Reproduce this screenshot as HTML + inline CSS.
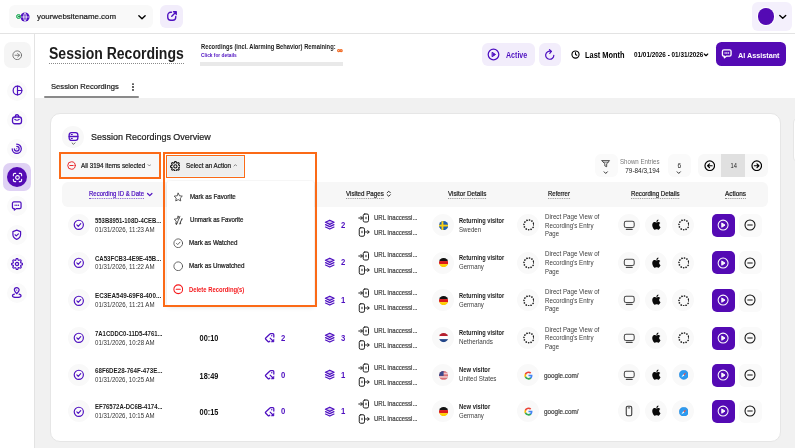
<!DOCTYPE html>
<html><head><meta charset="utf-8"><title>Session Recordings</title>
<style>
html,body{margin:0;padding:0;}
body{width:795px;height:448px;overflow:hidden;position:relative;background:#f1f1f1;font-family:"Liberation Sans",sans-serif;}
.b{position:absolute;display:block;}
.t{position:absolute;white-space:nowrap;font-family:"Liberation Sans",sans-serif;}
.m{-webkit-text-stroke:0.220px currentColor;}
.m2{-webkit-text-stroke:0.350px currentColor;}
</style></head><body>
<div id="app" style="position:absolute;left:0;top:0;width:795px;height:448px;overflow:hidden;will-change:transform;">
<div class="b" style="left:0px;top:0px;width:795px;height:448px;background:#f1f1f1;border-radius:0px;"></div>
<div class="b" style="left:0px;top:0px;width:795px;height:33px;background:#ffffff;border-radius:0px;border-bottom:1px solid #e3e3e3;"></div>
<div class="b" style="left:0px;top:34px;width:34px;height:414px;background:#ffffff;border-radius:0px;border-right:1px solid #e3e3e3;"></div>
<div class="b" style="left:35px;top:34px;width:760px;height:63.6px;background:#ffffff;border-radius:0px;"></div>
<div class="b" style="left:9.3px;top:4.8px;width:143.4px;height:23px;background:#f9f9f9;border-radius:6px;"></div>
<svg class="b" style="left:19.5px;top:11.5px;" width="10" height="10" viewBox="0 0 24 24" fill="none"><circle cx="12" cy="12" r="11" fill="#4e10c0"/><path d="M12 2v20M2 12h20M12 2c-5 5-5 15 0 20M12 2c5 5 5 15 0 20" stroke="#fff" stroke-width="1.6" fill="none"/></svg>
<div class="b" style="left:16.1px;top:13.8px;width:5.4px;height:5.4px;background:#9be3b9;border-radius:2.7px;border:0.900px solid #1fa855;box-sizing:border-box;"></div>
<div class="b" style="left:17.900000000000002px;top:15.6px;width:1.8px;height:1.8px;background:#167a3e;border-radius:0.9px;"></div>
<div class="t m" style="left:37.2px;top:12.02px;font-size:7.95px;line-height:10.54px;font-weight:400;color:#1c1c1c;transform-origin:left center;transform:scaleX(0.9947);">yourwebsitename.com</div>
<svg class="b" style="left:137.4px;top:11.899999999999999px;" width="10" height="10" viewBox="0 0 24 24" fill="none"><path d="M4.500 9l7.500 7 7.500-7" stroke="#000" stroke-width="3.4" stroke-linecap="round" stroke-linejoin="round"/></svg>
<div class="b" style="left:160px;top:5px;width:22.5px;height:23px;background:#f2edfb;border-radius:6px;"></div>
<svg class="b" style="left:165.6px;top:10.399999999999999px;" width="12" height="12" viewBox="0 0 24 24" fill="none"><path d="M11 4.500H9.500a6 6 0 0 0-6 6v4a6 6 0 0 0 6 6h4a6 6 0 0 0 6-6V13" stroke="#4e10c0" stroke-width="2.7" stroke-linecap="round" stroke-linejoin="round"/><path d="M15 3.500h5.500V9M20 4l-8.500 8.500" stroke="#4e10c0" stroke-width="2.7" stroke-linecap="round" stroke-linejoin="round"/></svg>
<div class="b" style="left:751.5px;top:2.2px;width:40.7px;height:28.6px;background:#f4f0fc;border-radius:6px;"></div>
<div class="b" style="left:756.6px;top:7.199999999999999px;width:18.6px;height:18.6px;background:#ffffff;border-radius:9.3px;"></div>
<div class="b" style="left:757.5px;top:8.1px;width:16.8px;height:16.8px;background:#540ab4;border-radius:8.4px;"></div>
<svg class="b" style="left:777.65px;top:12.149999999999999px;" width="9.5" height="9.5" viewBox="0 0 24 24" fill="none"><path d="M4.500 9l7.500 7 7.500-7" stroke="#000" stroke-width="3.4" stroke-linecap="round" stroke-linejoin="round"/></svg>
<div class="b" style="left:3.5px;top:41.7px;width:27px;height:26.3px;background:#f5f5f5;border-radius:7px;"></div>
<svg class="b" style="left:11.75px;top:49.75px;" width="10.5" height="10.5" viewBox="0 0 24 24" fill="none"><circle cx="12" cy="12" r="10" stroke="#6a6a6a" stroke-width="2" stroke-linecap="round" stroke-linejoin="round"/><path d="M7 12h10M13 8l4 4-4 4" stroke="#6a6a6a" stroke-width="2" stroke-linecap="round" stroke-linejoin="round"/></svg>
<div class="b" style="left:7px;top:80.6px;width:20px;height:20px;background:#fafafa;border-radius:10px;"></div>
<div class="b" style="left:7px;top:109.5px;width:20px;height:20px;background:#fafafa;border-radius:10px;"></div>
<div class="b" style="left:7px;top:139px;width:20px;height:20px;background:#fafafa;border-radius:10px;"></div>
<div class="b" style="left:7px;top:195.8px;width:20px;height:20px;background:#fafafa;border-radius:10px;"></div>
<div class="b" style="left:7px;top:224.8px;width:20px;height:20px;background:#fafafa;border-radius:10px;"></div>
<div class="b" style="left:7px;top:253.89999999999998px;width:20px;height:20px;background:#fafafa;border-radius:10px;"></div>
<div class="b" style="left:7px;top:283px;width:20px;height:20px;background:#fafafa;border-radius:10px;"></div>
<svg class="b" style="left:11.5px;top:85.1px;" width="11" height="11" viewBox="0 0 24 24" fill="none"><circle cx="12" cy="12" r="9.5" stroke="#4e10c0" stroke-width="2.6" stroke-linecap="round" stroke-linejoin="round"/><path d="M12 2.5V21.5M12 12h9.5" stroke="#4e10c0" stroke-width="2.6" stroke-linecap="round" stroke-linejoin="round"/></svg>
<svg class="b" style="left:11.100000000000001px;top:113.1px;" width="12" height="12" viewBox="0 0 24 24" fill="none"><rect x="3" y="8" width="18" height="13.500" rx="4.500" stroke="#4e10c0" stroke-width="2.6" stroke-linecap="round" stroke-linejoin="round"/><path d="M8.500 8V7a3.500 3.500 0 0 1 7 0v1" stroke="#4e10c0" stroke-width="2.6" stroke-linecap="round" stroke-linejoin="round"/><path d="M7.500 12.500q4.500 4 9 0" stroke="#4e10c0" stroke-width="2.2" stroke-linecap="round" stroke-linejoin="round"/></svg>
<svg class="b" style="left:11.25px;top:143.25px;" width="11.5" height="11.5" viewBox="0 0 24 24" fill="none"><path d="M12 2.500a9.500 9.500 0 1 1-9.500 9.500" stroke="#4e10c0" stroke-width="2.6" stroke-linecap="round" stroke-linejoin="round"/><path d="M12 7a5 5 0 1 1-5 5" stroke="#4e10c0" stroke-width="2.6" stroke-linecap="round" stroke-linejoin="round"/><circle cx="12" cy="12" r="1.300" fill="#4e10c0"/></svg>
<div class="b" style="left:3.2px;top:163.2px;width:28px;height:27.8px;background:#dfd1f4;border-radius:7px;"></div>
<div class="b" style="left:7.200000000000001px;top:167.2px;width:19.8px;height:19.8px;background:#540ab4;border-radius:9.9px;"></div>
<svg class="b" style="left:11.5px;top:171.5px;" width="11" height="11" viewBox="0 0 24 24" fill="none"><circle cx="12" cy="12" r="4" stroke="#fff" stroke-width="2.4" stroke-linecap="round" stroke-linejoin="round"/><path d="M3 8V6a3 3 0 0 1 3-3h2M16 3h2a3 3 0 0 1 3 3v2M21 16v2a3 3 0 0 1-3 3h-2M8 21H6a3 3 0 0 1-3-3v-2" stroke="#fff" stroke-width="2.4" stroke-linecap="round" stroke-linejoin="round"/></svg>
<svg class="b" style="left:11.25px;top:200.05px;" width="11.5" height="11.5" viewBox="0 0 24 24" fill="none"><path d="M6 4h12a3 3 0 0 1 3 3v8a3 3 0 0 1-3 3h-7l-4 3v-3H6a3 3 0 0 1-3-3V7a3 3 0 0 1 3-3z" stroke="#4e10c0" stroke-width="2.6" stroke-linecap="round" stroke-linejoin="round"/><path d="M8.500 11h.1M12 11h.1M15.500 11h.1" stroke="#4e10c0" stroke-width="2.8" stroke-linecap="round" stroke-linejoin="round"/></svg>
<svg class="b" style="left:11.25px;top:229.05px;" width="11.5" height="11.5" viewBox="0 0 24 24" fill="none"><path d="M12 2.500l8 3v6c0 5-3.500 8.500-8 10-4.500-1.500-8-5-8-10v-6z" stroke="#4e10c0" stroke-width="2.6" stroke-linecap="round" stroke-linejoin="round"/><path d="M8.500 12l2.500 2.500 4.500-4.500" stroke="#4e10c0" stroke-width="2.4" stroke-linecap="round" stroke-linejoin="round"/></svg>
<svg class="b" style="left:11.0px;top:257.9px;" width="12" height="12" viewBox="0 0 24 24" fill="none"><circle cx="12" cy="12" r="3.200" stroke="#4e10c0" stroke-width="2.6" stroke-linecap="round" stroke-linejoin="round"/><path d="M19.4 15a1.65 1.65 0 0 0 .33 1.82l.06.06a2 2 0 0 1 0 2.83 2 2 0 0 1-2.83 0l-.06-.06a1.65 1.65 0 0 0-1.82-.33 1.65 1.65 0 0 0-1 1.51V21a2 2 0 0 1-2 2 2 2 0 0 1-2-2v-.09A1.65 1.65 0 0 0 9 19.4a1.65 1.65 0 0 0-1.82.33l-.06.06a2 2 0 0 1-2.83 0 2 2 0 0 1 0-2.83l.06-.06a1.65 1.65 0 0 0 .33-1.82 1.65 1.65 0 0 0-1.51-1H3a2 2 0 0 1-2-2 2 2 0 0 1 2-2h.09A1.65 1.65 0 0 0 4.6 9a1.65 1.65 0 0 0-.33-1.82l-.06-.06a2 2 0 0 1 0-2.83 2 2 0 0 1 2.83 0l.06.06a1.65 1.65 0 0 0 1.82.33H9a1.65 1.65 0 0 0 1-1.51V3a2 2 0 0 1 2-2 2 2 0 0 1 2 2v.09a1.65 1.65 0 0 0 1 1.51 1.65 1.65 0 0 0 1.82-.33l.06-.06a2 2 0 0 1 2.83 0 2 2 0 0 1 0 2.83l-.06.06a1.65 1.65 0 0 0-.33 1.82V9a1.65 1.65 0 0 0 1.51 1H21a2 2 0 0 1 2 2 2 2 0 0 1-2 2h-.09a1.65 1.65 0 0 0-1.51 1z" stroke="#4e10c0" stroke-width="2.4" stroke-linecap="round" stroke-linejoin="round"/></svg>
<svg class="b" style="left:11.25px;top:287.25px;" width="11.5" height="11.5" viewBox="0 0 24 24" fill="none"><path d="M12 14c3-3 5-5 5-7.500a5 5 0 0 0-10 0c0 2.500 2 4.500 5 7.500z" stroke="#4e10c0" stroke-width="2.6" stroke-linecap="round" stroke-linejoin="round"/><circle cx="12" cy="6.500" r="1.200" fill="#4e10c0"/><path d="M7 15c-2.500.700-4 1.800-4 3 0 2 4 3.500 9 3.500s9-1.500 9-3.500c0-1.200-1.500-2.300-4-3" stroke="#4e10c0" stroke-width="2.6" stroke-linecap="round" stroke-linejoin="round"/></svg>
<div class="t " style="left:49.3px;top:44.02px;font-size:15.8px;line-height:19.96px;font-weight:700;color:#1c1c1c;transform-origin:left center;transform:scaleX(0.8876);">Session Recordings</div>
<div class="b" style="left:49px;top:62.5px;width:135px;height:1px;background:transparent;border-radius:0px;border-top:1px dotted #8a8a8a;height:0;"></div>
<div class="t " style="left:200.6px;top:43.02px;font-size:6.57px;line-height:8.88px;font-weight:700;color:#1c1c1c;transform-origin:left center;transform:scaleX(0.8803);">Recordings (incl. Alarming Behavior) Remaining:</div>
<div class="t m2" style="left:337px;top:46.02px;font-size:7.95px;line-height:10.54px;font-weight:700;color:#f0641a;transform-origin:left center;transform:scaleX(0.9873);">&#8734;</div>
<div class="t " style="left:200.6px;top:52.02px;font-size:5.72px;line-height:7.86px;font-weight:700;color:#4e10c0;transform-origin:left center;transform:scaleX(0.8405);">Click for details</div>
<div class="b" style="left:200px;top:62px;width:143px;height:3.5px;background:#e9e9e9;border-radius:0px;"></div>
<div class="t m" style="left:51.3px;top:82.02px;font-size:8.06px;line-height:10.67px;font-weight:400;color:#1c1c1c;transform-origin:left center;transform:scaleX(0.9472);">Session Recordings</div>
<svg class="b" style="left:128.0px;top:81.6px;" width="10" height="10" viewBox="0 0 24 24" fill="none"><circle cx="12" cy="5" r="2.200" fill="#1c1c1c"/><circle cx="12" cy="12" r="2.200" fill="#1c1c1c"/><circle cx="12" cy="19" r="2.200" fill="#1c1c1c"/></svg>
<div class="b" style="left:44px;top:96.2px;width:94.5px;height:1.7px;background:#8a8a8a;border-radius:1px;"></div>
<div class="b" style="left:482px;top:42.5px;width:52.5px;height:23px;background:#f2edfb;border-radius:6px;"></div>
<svg class="b" style="left:487.2px;top:47.8px;" width="13" height="13" viewBox="0 0 24 24" fill="none"><circle cx="12" cy="12" r="9.800" stroke="#4e10c0" stroke-width="2.3" stroke-linecap="round" stroke-linejoin="round"/><path d="M10 8.200l5.800 3.800-5.800 3.800z" stroke="#4e10c0" stroke-width="1.8" stroke-linecap="round" stroke-linejoin="round" fill="#4e10c0"/></svg>
<div class="t " style="left:505.6px;top:51.02px;font-size:8.16px;line-height:10.79px;font-weight:700;color:#4e10c0;transform-origin:left center;transform:scaleX(0.8659);">Active</div>
<div class="b" style="left:538.5px;top:42.5px;width:22.5px;height:23px;background:#f2edfb;border-radius:6px;"></div>
<svg class="b" style="left:544.05px;top:48.55px;" width="11.5" height="11.5" viewBox="0 0 24 24" fill="none"><path d="M20.500 13a8.500 8.500 0 1 1-6-8.200" stroke="#4e10c0" stroke-width="2.5" stroke-linecap="round" stroke-linejoin="round"/><path d="M11.500 1.500l4 3.500-3.500 4" stroke="#4e10c0" stroke-width="2.5" stroke-linecap="round" stroke-linejoin="round"/></svg>
<svg class="b" style="left:571.2px;top:49.8px;" width="9" height="9" viewBox="0 0 24 24" fill="none"><circle cx="12" cy="12" r="9.500" stroke="#000" stroke-width="3" stroke-linecap="round" stroke-linejoin="round"/><path d="M12 6.500V12l3.500 2" stroke="#000" stroke-width="2.8" stroke-linecap="round" stroke-linejoin="round"/></svg>
<div class="t " style="left:584.5px;top:50.02px;font-size:8.37px;line-height:11.04px;font-weight:700;color:#000;transform-origin:left center;transform:scaleX(0.8883);">Last Month</div>
<div class="t " style="left:634px;top:50.02px;font-size:6.68px;line-height:9.02px;font-weight:700;color:#000;transform-origin:left center;transform:scaleX(0.9544);">01/01/2026 - 01/31/2026</div>
<svg class="b" style="left:702.8px;top:51.6px;" width="6" height="6" viewBox="0 0 24 24" fill="none"><path d="M5 8l7 7 7-7" stroke="#000" stroke-width="4.5" stroke-linecap="round" stroke-linejoin="round"/></svg>
<div class="b" style="left:716px;top:42.3px;width:70px;height:23.4px;background:#540ab4;border-radius:5.5px;"></div>
<svg class="b" style="left:721.45px;top:48.45px;" width="11.5" height="11.5" viewBox="0 0 24 24" fill="none"><path d="M6 4h12a3 3 0 0 1 3 3v7a3 3 0 0 1-3 3h-7l-4 3.500V17H6a3 3 0 0 1-3-3V7a3 3 0 0 1 3-3z" stroke="#fff" stroke-width="2.8" stroke-linecap="round" stroke-linejoin="round"/><path d="M8.500 10.500h.1M12 10.500h.1M15.500 10.500h.1" stroke="#fff" stroke-width="3" stroke-linecap="round" stroke-linejoin="round"/></svg>
<div class="t " style="left:737.8px;top:51.02px;font-size:8.06px;line-height:10.67px;font-weight:700;color:#ffffff;transform-origin:left center;transform:scaleX(0.8979);">AI Assistant</div>
<div class="b" style="left:49.6px;top:113px;width:731px;height:328.8px;background:#ffffff;border-radius:10px;border:1px solid #e6e6e6;box-sizing:border-box;"></div>
<div class="b" style="left:793px;top:117px;width:10px;height:44px;background:#ffffff;border-radius:6px;border:1px solid #e6e6e6;"></div>
<div class="b" style="left:62.4px;top:126.4px;width:21.2px;height:21.2px;background:#f8f8f8;border-radius:10.6px;"></div>
<svg class="b" style="left:67.6px;top:130.7px;" width="11" height="11" viewBox="0 0 24 24" fill="none"><rect x="2.500" y="3.500" width="19" height="17" rx="5" stroke="#4e10c0" stroke-width="2.8" stroke-linecap="round" stroke-linejoin="round"/><path d="M2.500 12h19" stroke="#4e10c0" stroke-width="2.8" stroke-linecap="round" stroke-linejoin="round"/><path d="M7 7.800h2.500M7 16.200h2.500" stroke="#4e10c0" stroke-width="2.2" stroke-linecap="round" stroke-linejoin="round"/></svg>
<svg class="b" style="left:70.5px;top:141.3px;" width="5" height="5" viewBox="0 0 24 24" fill="none"><path d="M5 9l7 7 7-7" stroke="#333" stroke-width="3.5" stroke-linecap="round" stroke-linejoin="round"/></svg>
<div class="t m" style="left:90.8px;top:131.02px;font-size:9.86px;line-height:12.83px;font-weight:400;color:#1c1c1c;transform-origin:left center;transform:scaleX(0.9123);">Session Recordings Overview</div>
<div class="b" style="left:595px;top:154px;width:22.5px;height:23px;background:#fafafa;border-radius:6px;"></div>
<svg class="b" style="left:601.25px;top:159.45px;" width="9.5" height="9.5" viewBox="0 0 24 24" fill="none"><path d="M2.500 4h19l-7.200 8.500v7l-4.600 -2v-5z" stroke="#1c1c1c" stroke-width="1.9" stroke-linecap="round" stroke-linejoin="round"/><path d="M6 8h12" stroke="#1c1c1c" stroke-width="1.5" stroke-linecap="round" stroke-linejoin="round"/></svg>
<svg class="b" style="left:603.25px;top:170.05px;" width="5.5" height="5.5" viewBox="0 0 24 24" fill="none"><path d="M5 8l7 7 7-7" stroke="#000" stroke-width="3.6" stroke-linecap="round" stroke-linejoin="round"/></svg>
<div class="t " style="left:560px;top:158.02px;font-size:6.57px;line-height:8.88px;font-weight:400;color:#7a7a7a;width:99.5px;text-align:right;transform-origin:right center;transform:scaleX(0.9332);">Shown Entries</div>
<div class="t " style="left:560px;top:166.02px;font-size:6.68px;line-height:9.02px;font-weight:400;color:#1c1c1c;width:99.5px;text-align:right;transform-origin:right center;transform:scaleX(0.9600);">79-84/3,194</div>
<div class="b" style="left:668px;top:154px;width:22.5px;height:23px;background:#fafafa;border-radius:6px;"></div>
<div class="t " style="left:668px;top:162.02px;font-size:6.6px;line-height:8.92px;font-weight:400;color:#1c1c1c;width:22.5px;text-align:center;">6</div>
<svg class="b" style="left:676.45px;top:170.05px;" width="5.5" height="5.5" viewBox="0 0 24 24" fill="none"><path d="M5 8l7 7 7-7" stroke="#000" stroke-width="3.6" stroke-linecap="round" stroke-linejoin="round"/></svg>
<div class="b" style="left:698px;top:154.3px;width:70.3px;height:22.5px;background:#f8f8f8;border-radius:6px;"></div>
<div class="b" style="left:721.3px;top:154.3px;width:23.6px;height:22.5px;background:#e0e0e0;border-radius:0px;"></div>
<div class="t " style="left:721.6px;top:161.02px;font-size:7.0px;line-height:9.4px;font-weight:400;color:#1c1c1c;width:23.3px;text-align:center;transform-origin:center center;transform:scaleX(0.8208);">14</div>
<svg class="b" style="left:703.65px;top:159.75px;" width="11.5" height="11.5" viewBox="0 0 24 24" fill="none"><circle cx="12" cy="12" r="10" stroke="#000" stroke-width="2.5" stroke-linecap="round" stroke-linejoin="round"/><path d="M17 12H7.500M11.500 8l-4 4 4 4" stroke="#000" stroke-width="2.5" stroke-linecap="round" stroke-linejoin="round"/></svg>
<svg class="b" style="left:750.85px;top:159.75px;" width="11.5" height="11.5" viewBox="0 0 24 24" fill="none"><circle cx="12" cy="12" r="10" stroke="#000" stroke-width="2.5" stroke-linecap="round" stroke-linejoin="round"/><path d="M7 12h9.500M12.500 8l4 4-4 4" stroke="#000" stroke-width="2.5" stroke-linecap="round" stroke-linejoin="round"/></svg>
<div class="b" style="left:62px;top:181.5px;width:706.3px;height:25px;background:#f7f7f7;border-radius:6px;"></div>
<div class="t m" style="left:89px;top:190.02px;font-size:6.78px;line-height:9.14px;font-weight:400;color:#4e10c0;transform-origin:left center;transform:scaleX(0.8862);border-bottom:1px dotted #7a4fd0;line-height:8px;">Recording ID &amp; Date</div>
<svg class="b" style="left:145.75px;top:190.55px;" width="7.5" height="7.5" viewBox="0 0 24 24" fill="none"><path d="M5 8l7 7 7-7" stroke="#4e10c0" stroke-width="3.8" stroke-linecap="round" stroke-linejoin="round"/></svg>
<div class="t m" style="left:346px;top:190.02px;font-size:6.78px;line-height:9.14px;font-weight:400;color:#1c1c1c;transform-origin:left center;transform:scaleX(0.9164);border-bottom:1px dotted #8a8a8a;line-height:8px;">Visited Pages</div>
<svg class="b" style="left:384.25px;top:189.25px;" width="9.5" height="9.5" viewBox="0 0 24 24" fill="none"><path d="M8 9.500l4-4 4 4M8 14.500l4 4 4-4" stroke="#222" stroke-width="2.4" stroke-linecap="round" stroke-linejoin="round"/></svg>
<div class="t m" style="left:448.4px;top:190.02px;font-size:6.78px;line-height:9.14px;font-weight:400;color:#1c1c1c;transform-origin:left center;transform:scaleX(0.9285);border-bottom:1px dotted #8a8a8a;line-height:8px;">Visitor Details</div>
<div class="t m" style="left:547.8px;top:190.02px;font-size:6.78px;line-height:9.14px;font-weight:400;color:#1c1c1c;transform-origin:left center;transform:scaleX(0.8821);border-bottom:1px dotted #8a8a8a;line-height:8px;">Referrer</div>
<div class="t m" style="left:631px;top:190.02px;font-size:6.78px;line-height:9.14px;font-weight:400;color:#1c1c1c;transform-origin:left center;transform:scaleX(0.9100);border-bottom:1px dotted #8a8a8a;line-height:8px;">Recording Details</div>
<div class="t m" style="left:725px;top:190.02px;font-size:6.78px;line-height:9.14px;font-weight:400;color:#1c1c1c;transform-origin:left center;transform:scaleX(0.9465);border-bottom:1px dotted #8a8a8a;line-height:8px;">Actions</div>
<div class="b" style="left:67.8px;top:214.2px;width:22px;height:22px;background:#f9f9f9;border-radius:11px;"></div>
<svg class="b" style="left:73.0px;top:219.39999999999998px;" width="11.6" height="11.6" viewBox="0 0 24 24" fill="none"><circle cx="12" cy="12" r="9.500" stroke="#4e10c0" stroke-width="2.4" stroke-linecap="round" stroke-linejoin="round"/><path d="M8 12.300l2.800 2.800 5.200-5.600" stroke="#4e10c0" stroke-width="2.4" stroke-linecap="round" stroke-linejoin="round"/></svg>
<div class="t " style="left:94.5px;top:216.02px;font-size:6.68px;line-height:9.02px;font-weight:700;color:#1c1c1c;transform-origin:left center;transform:scaleX(0.8880);">553B8951-108D-4CEB...</div>
<div class="t " style="left:94.5px;top:225.02px;font-size:7.0px;line-height:9.4px;font-weight:400;color:#333;transform-origin:left center;transform:scaleX(0.8752);">01/31/2026, 11:23 AM</div>
<svg class="b" style="left:323.65px;top:219.45px;" width="11.5" height="11.5" viewBox="0 0 24 24" fill="none"><path d="M12 2.500l9 4.300-9 4.300-9-4.300z" stroke="#4e10c0" stroke-width="2.6" stroke-linecap="round" stroke-linejoin="round" fill="#4e10c0" fill-opacity=".25"/><path d="M3.200 11.800l8.800 4.200 8.800-4.200M3.200 16.800l8.800 4.200 8.800-4.200" stroke="#4e10c0" stroke-width="2.6" stroke-linecap="round" stroke-linejoin="round"/></svg>
<div class="t " style="left:340.7px;top:220.02px;font-size:8.8px;line-height:11.56px;font-weight:700;color:#4e10c0;transform-origin:left center;transform:scaleX(0.8764);">2</div>
<svg class="b" style="left:357.8px;top:212.1px;" width="12" height="12" viewBox="0 0 24 24" fill="none"><rect x="10.500" y="4" width="10.500" height="16" rx="3" stroke="#222" stroke-width="2" stroke-linecap="round" stroke-linejoin="round"/><path d="M1.500 12h7M6 9l2.800 3-2.800 3" stroke="#222" stroke-width="2" stroke-linecap="round" stroke-linejoin="round"/><path d="M16 10.500v3" stroke="#222" stroke-width="2" stroke-linecap="round" stroke-linejoin="round"/></svg>
<div class="t m" style="left:373.5px;top:213.02px;font-size:7.0px;line-height:9.4px;font-weight:400;color:#444;transform-origin:left center;transform:scaleX(0.8646);">URL inaccessi...</div>
<svg class="b" style="left:357.8px;top:226.39999999999998px;" width="12" height="12" viewBox="0 0 24 24" fill="none"><rect x="2.500" y="3.500" width="10.500" height="17" rx="3" stroke="#222" stroke-width="2" stroke-linecap="round" stroke-linejoin="round"/><path d="M15 12h7M19.500 9l2.800 3-2.800 3" stroke="#222" stroke-width="2" stroke-linecap="round" stroke-linejoin="round"/><path d="M8 10.500v3" stroke="#222" stroke-width="2" stroke-linecap="round" stroke-linejoin="round"/></svg>
<div class="t m" style="left:373.5px;top:228.02px;font-size:7.0px;line-height:9.4px;font-weight:400;color:#444;transform-origin:left center;transform:scaleX(0.8646);">URL inaccessi...</div>
<div class="b" style="left:432.4px;top:214.2px;width:22px;height:22px;background:#f9f9f9;border-radius:11px;"></div>
<svg class="b" style="left:438.79999999999995px;top:220.6px" width="9.2" height="9.2" viewBox="0 0 20 20"><defs><clipPath id="fc"><circle cx="10" cy="10" r="10"/></clipPath></defs><g clip-path="url(#fc)"><rect width="20" height="20" fill="#1f5fae"/><rect x="5.500" width="4" height="20" fill="#fdd116"/><rect y="8" width="20" height="4" fill="#fdd116"/></g><circle cx="10" cy="10" r="9.700" fill="none" stroke="rgba(0,0,0,.08)" stroke-width=".6"/></svg>
<div class="t " style="left:458.8px;top:217.02px;font-size:6.57px;line-height:8.88px;font-weight:700;color:#1c1c1c;transform-origin:left center;transform:scaleX(0.8607);">Returning visitor</div>
<div class="t " style="left:458.8px;top:226.02px;font-size:6.57px;line-height:8.88px;font-weight:400;color:#3d3d3d;transform-origin:left center;transform:scaleX(0.9360);">Sweden</div>
<div class="b" style="left:517.4px;top:214.2px;width:22px;height:22px;background:#f9f9f9;border-radius:11px;"></div>
<svg class="b" style="left:522.5px;top:219.29999999999998px;" width="11.8" height="11.8" viewBox="0 0 24 24" fill="none"><circle cx="12" cy="12" r="10" stroke="#1c1c1c" stroke-width="3.300" stroke-linecap="round" stroke-dasharray="0.2 5.036" fill="none"/></svg>
<div class="t " style="left:544.5px;top:213.02px;font-size:6.57px;line-height:8.88px;font-weight:400;color:#3d3d3d;transform-origin:left center;transform:scaleX(0.9441);">Direct Page View of</div>
<div class="t " style="left:544.5px;top:222.02px;font-size:6.57px;line-height:8.88px;font-weight:400;color:#3d3d3d;transform-origin:left center;transform:scaleX(0.9400);">Recording's Entry</div>
<div class="t " style="left:544.5px;top:230.02px;font-size:6.57px;line-height:8.88px;font-weight:400;color:#3d3d3d;transform-origin:left center;transform:scaleX(0.9134);">Page</div>
<div class="b" style="left:618px;top:214.2px;width:22px;height:22px;background:#f9f9f9;border-radius:11px;"></div>
<div class="b" style="left:645.2px;top:214.2px;width:22px;height:22px;background:#f9f9f9;border-radius:11px;"></div>
<div class="b" style="left:672.4px;top:214.2px;width:22px;height:22px;background:#f9f9f9;border-radius:11px;"></div>
<svg class="b" style="left:623.05px;top:219.14999999999998px;" width="12.5" height="12.5" viewBox="0 0 24 24" fill="none"><rect x="2.500" y="4.500" width="19" height="12" rx="3.500" stroke="#4a4a4a" stroke-width="2" stroke-linecap="round" stroke-linejoin="round"/><path d="M6.500 20h11" stroke="#4a4a4a" stroke-width="2.4" stroke-linecap="round" stroke-linejoin="round"/></svg>
<svg class="b" style="left:650.65px;top:219.14999999999998px;" width="11.5" height="11.5" viewBox="0 0 24 24" fill="none"><path fill="#0a0a0a" d="M17.050 12.540c-.030-2.700 2.200-4 2.300-4.060-1.260-1.830-3.200-2.080-3.900-2.110-1.650-.170-3.230.980-4.070.980-.840 0-2.140-.960-3.510-.930-1.810.030-3.470 1.050-4.400 2.670-1.880 3.250-.480 8.070 1.350 10.710.890 1.290 1.960 2.740 3.350 2.690 1.350-.050 1.860-.870 3.480-.870 1.620 0 2.080.870 3.500.840 1.450-.030 2.370-1.320 3.250-2.610 1.030-1.500 1.450-2.950 1.470-3.020-.030-.010-2.820-1.080-2.850-4.290zM14.400 4.600c.740-.900 1.240-2.150 1.110-3.400-1.070.040-2.360.710-3.130 1.610-.690.800-1.290 2.070-1.130 3.300 1.190.090 2.410-.610 3.150-1.510z"/></svg>
<svg class="b" style="left:677.5px;top:219.29999999999998px;" width="11.8" height="11.8" viewBox="0 0 24 24" fill="none"><circle cx="12" cy="12" r="10" stroke="#1c1c1c" stroke-width="3.300" stroke-linecap="round" stroke-dasharray="0.2 5.036" fill="none"/></svg>
<div class="b" style="left:711.5px;top:213.7px;width:23.5px;height:23px;background:#540ab4;border-radius:5px;"></div>
<svg class="b" style="left:717.1999999999999px;top:219.1px;" width="12.2" height="12.2" viewBox="0 0 24 24" fill="none"><circle cx="12" cy="12" r="9.800" stroke="#fff" stroke-width="2" stroke-linecap="round" stroke-linejoin="round"/><path d="M10 8.200l5.800 3.800-5.800 3.800z" stroke="#fff" stroke-width="1.9" stroke-linecap="round" stroke-linejoin="round" fill="#fff"/></svg>
<div class="b" style="left:738.7px;top:213.7px;width:23px;height:23px;background:#fafafa;border-radius:6px;"></div>
<svg class="b" style="left:744.2px;top:219.2px;" width="12" height="12" viewBox="0 0 24 24" fill="none"><circle cx="12" cy="12" r="10" stroke="#111" stroke-width="2.1" stroke-linecap="round" stroke-linejoin="round"/><path d="M7.500 12h9" stroke="#111" stroke-width="2" stroke-linecap="round" stroke-linejoin="round"/></svg>
<div class="b" style="left:67.8px;top:251.8px;width:22px;height:22px;background:#f9f9f9;border-radius:11px;"></div>
<svg class="b" style="left:73.0px;top:257.0px;" width="11.6" height="11.6" viewBox="0 0 24 24" fill="none"><circle cx="12" cy="12" r="9.500" stroke="#4e10c0" stroke-width="2.4" stroke-linecap="round" stroke-linejoin="round"/><path d="M8 12.300l2.800 2.800 5.200-5.600" stroke="#4e10c0" stroke-width="2.4" stroke-linecap="round" stroke-linejoin="round"/></svg>
<div class="t " style="left:94.5px;top:254.02px;font-size:6.68px;line-height:9.02px;font-weight:700;color:#1c1c1c;transform-origin:left center;transform:scaleX(0.9063);">CA53FCB3-4E9E-45B...</div>
<div class="t " style="left:94.5px;top:262.02px;font-size:7.0px;line-height:9.4px;font-weight:400;color:#333;transform-origin:left center;transform:scaleX(0.8752);">01/31/2026, 11:22 AM</div>
<svg class="b" style="left:323.65px;top:257.05px;" width="11.5" height="11.5" viewBox="0 0 24 24" fill="none"><path d="M12 2.500l9 4.300-9 4.300-9-4.300z" stroke="#4e10c0" stroke-width="2.6" stroke-linecap="round" stroke-linejoin="round" fill="#4e10c0" fill-opacity=".25"/><path d="M3.200 11.800l8.800 4.200 8.800-4.200M3.200 16.800l8.800 4.200 8.800-4.200" stroke="#4e10c0" stroke-width="2.6" stroke-linecap="round" stroke-linejoin="round"/></svg>
<div class="t " style="left:340.7px;top:257.02px;font-size:8.8px;line-height:11.56px;font-weight:700;color:#4e10c0;transform-origin:left center;transform:scaleX(0.8764);">2</div>
<svg class="b" style="left:357.8px;top:249.70000000000002px;" width="12" height="12" viewBox="0 0 24 24" fill="none"><rect x="10.500" y="4" width="10.500" height="16" rx="3" stroke="#222" stroke-width="2" stroke-linecap="round" stroke-linejoin="round"/><path d="M1.500 12h7M6 9l2.800 3-2.800 3" stroke="#222" stroke-width="2" stroke-linecap="round" stroke-linejoin="round"/><path d="M16 10.500v3" stroke="#222" stroke-width="2" stroke-linecap="round" stroke-linejoin="round"/></svg>
<div class="t m" style="left:373.5px;top:250.02px;font-size:7.0px;line-height:9.4px;font-weight:400;color:#444;transform-origin:left center;transform:scaleX(0.8646);">URL inaccessi...</div>
<svg class="b" style="left:357.8px;top:264.0px;" width="12" height="12" viewBox="0 0 24 24" fill="none"><rect x="2.500" y="3.500" width="10.500" height="17" rx="3" stroke="#222" stroke-width="2" stroke-linecap="round" stroke-linejoin="round"/><path d="M15 12h7M19.500 9l2.800 3-2.800 3" stroke="#222" stroke-width="2" stroke-linecap="round" stroke-linejoin="round"/><path d="M8 10.500v3" stroke="#222" stroke-width="2" stroke-linecap="round" stroke-linejoin="round"/></svg>
<div class="t m" style="left:373.5px;top:266.02px;font-size:7.0px;line-height:9.4px;font-weight:400;color:#444;transform-origin:left center;transform:scaleX(0.8646);">URL inaccessi...</div>
<div class="b" style="left:432.4px;top:251.8px;width:22px;height:22px;background:#f9f9f9;border-radius:11px;"></div>
<svg class="b" style="left:438.79999999999995px;top:258.2px" width="9.2" height="9.2" viewBox="0 0 20 20"><defs><clipPath id="fc"><circle cx="10" cy="10" r="10"/></clipPath></defs><g clip-path="url(#fc)"><rect width="20" height="7" fill="#111"/><rect y="6.700" width="20" height="6.700" fill="#dd1a1a"/><rect y="13.300" width="20" height="7" fill="#ffce00"/></g><circle cx="10" cy="10" r="9.700" fill="none" stroke="rgba(0,0,0,.08)" stroke-width=".6"/></svg>
<div class="t " style="left:458.8px;top:254.02px;font-size:6.57px;line-height:8.88px;font-weight:700;color:#1c1c1c;transform-origin:left center;transform:scaleX(0.8607);">Returning visitor</div>
<div class="t " style="left:458.8px;top:263.02px;font-size:6.57px;line-height:8.88px;font-weight:400;color:#3d3d3d;transform-origin:left center;transform:scaleX(0.9222);">Germany</div>
<div class="b" style="left:517.4px;top:251.8px;width:22px;height:22px;background:#f9f9f9;border-radius:11px;"></div>
<svg class="b" style="left:522.5px;top:256.90000000000003px;" width="11.8" height="11.8" viewBox="0 0 24 24" fill="none"><circle cx="12" cy="12" r="10" stroke="#1c1c1c" stroke-width="3.300" stroke-linecap="round" stroke-dasharray="0.2 5.036" fill="none"/></svg>
<div class="t " style="left:544.5px;top:250.02px;font-size:6.57px;line-height:8.88px;font-weight:400;color:#3d3d3d;transform-origin:left center;transform:scaleX(0.9441);">Direct Page View of</div>
<div class="t " style="left:544.5px;top:259.02px;font-size:6.57px;line-height:8.88px;font-weight:400;color:#3d3d3d;transform-origin:left center;transform:scaleX(0.9400);">Recording's Entry</div>
<div class="t " style="left:544.5px;top:268.02px;font-size:6.57px;line-height:8.88px;font-weight:400;color:#3d3d3d;transform-origin:left center;transform:scaleX(0.9134);">Page</div>
<div class="b" style="left:618px;top:251.8px;width:22px;height:22px;background:#f9f9f9;border-radius:11px;"></div>
<div class="b" style="left:645.2px;top:251.8px;width:22px;height:22px;background:#f9f9f9;border-radius:11px;"></div>
<div class="b" style="left:672.4px;top:251.8px;width:22px;height:22px;background:#f9f9f9;border-radius:11px;"></div>
<svg class="b" style="left:623.05px;top:256.75px;" width="12.5" height="12.5" viewBox="0 0 24 24" fill="none"><rect x="2.500" y="4.500" width="19" height="12" rx="3.500" stroke="#4a4a4a" stroke-width="2" stroke-linecap="round" stroke-linejoin="round"/><path d="M6.500 20h11" stroke="#4a4a4a" stroke-width="2.4" stroke-linecap="round" stroke-linejoin="round"/></svg>
<svg class="b" style="left:650.65px;top:256.75px;" width="11.5" height="11.5" viewBox="0 0 24 24" fill="none"><path fill="#0a0a0a" d="M17.050 12.540c-.030-2.700 2.200-4 2.300-4.060-1.260-1.830-3.200-2.080-3.900-2.110-1.650-.170-3.230.980-4.070.980-.840 0-2.140-.960-3.510-.930-1.810.030-3.470 1.050-4.400 2.670-1.880 3.250-.480 8.070 1.350 10.710.890 1.290 1.960 2.740 3.350 2.690 1.350-.050 1.860-.870 3.480-.870 1.620 0 2.080.870 3.500.840 1.450-.030 2.370-1.320 3.250-2.610 1.030-1.500 1.450-2.950 1.470-3.020-.030-.010-2.820-1.080-2.850-4.290zM14.400 4.600c.740-.900 1.240-2.150 1.110-3.400-1.070.040-2.360.710-3.130 1.610-.690.800-1.290 2.070-1.130 3.300 1.190.090 2.410-.610 3.150-1.510z"/></svg>
<svg class="b" style="left:677.5px;top:256.90000000000003px;" width="11.8" height="11.8" viewBox="0 0 24 24" fill="none"><circle cx="12" cy="12" r="10" stroke="#1c1c1c" stroke-width="3.300" stroke-linecap="round" stroke-dasharray="0.2 5.036" fill="none"/></svg>
<div class="b" style="left:711.5px;top:251.3px;width:23.5px;height:23px;background:#540ab4;border-radius:5px;"></div>
<svg class="b" style="left:717.1999999999999px;top:256.7px;" width="12.2" height="12.2" viewBox="0 0 24 24" fill="none"><circle cx="12" cy="12" r="9.800" stroke="#fff" stroke-width="2" stroke-linecap="round" stroke-linejoin="round"/><path d="M10 8.200l5.800 3.800-5.800 3.800z" stroke="#fff" stroke-width="1.9" stroke-linecap="round" stroke-linejoin="round" fill="#fff"/></svg>
<div class="b" style="left:738.7px;top:251.3px;width:23px;height:23px;background:#fafafa;border-radius:6px;"></div>
<svg class="b" style="left:744.2px;top:256.8px;" width="12" height="12" viewBox="0 0 24 24" fill="none"><circle cx="12" cy="12" r="10" stroke="#111" stroke-width="2.1" stroke-linecap="round" stroke-linejoin="round"/><path d="M7.500 12h9" stroke="#111" stroke-width="2" stroke-linecap="round" stroke-linejoin="round"/></svg>
<div class="b" style="left:67.8px;top:289.4px;width:22px;height:22px;background:#f9f9f9;border-radius:11px;"></div>
<svg class="b" style="left:73.0px;top:294.59999999999997px;" width="11.6" height="11.6" viewBox="0 0 24 24" fill="none"><circle cx="12" cy="12" r="9.500" stroke="#4e10c0" stroke-width="2.4" stroke-linecap="round" stroke-linejoin="round"/><path d="M8 12.300l2.800 2.800 5.200-5.600" stroke="#4e10c0" stroke-width="2.4" stroke-linecap="round" stroke-linejoin="round"/></svg>
<div class="t " style="left:94.5px;top:291.02px;font-size:6.68px;line-height:9.02px;font-weight:700;color:#1c1c1c;transform-origin:left center;transform:scaleX(0.9493);">EC3EA549-69F8-400...</div>
<div class="t " style="left:94.5px;top:300.02px;font-size:7.0px;line-height:9.4px;font-weight:400;color:#333;transform-origin:left center;transform:scaleX(0.8752);">01/31/2026, 11:21 AM</div>
<svg class="b" style="left:323.65px;top:294.65px;" width="11.5" height="11.5" viewBox="0 0 24 24" fill="none"><path d="M12 2.500l9 4.300-9 4.300-9-4.300z" stroke="#4e10c0" stroke-width="2.6" stroke-linecap="round" stroke-linejoin="round" fill="#4e10c0" fill-opacity=".25"/><path d="M3.200 11.800l8.800 4.200 8.800-4.200M3.200 16.800l8.800 4.200 8.800-4.200" stroke="#4e10c0" stroke-width="2.6" stroke-linecap="round" stroke-linejoin="round"/></svg>
<div class="t " style="left:340.7px;top:295.02px;font-size:8.8px;line-height:11.56px;font-weight:700;color:#4e10c0;transform-origin:left center;transform:scaleX(0.8764);">1</div>
<svg class="b" style="left:357.8px;top:287.29999999999995px;" width="12" height="12" viewBox="0 0 24 24" fill="none"><rect x="10.500" y="4" width="10.500" height="16" rx="3" stroke="#222" stroke-width="2" stroke-linecap="round" stroke-linejoin="round"/><path d="M1.500 12h7M6 9l2.800 3-2.800 3" stroke="#222" stroke-width="2" stroke-linecap="round" stroke-linejoin="round"/><path d="M16 10.500v3" stroke="#222" stroke-width="2" stroke-linecap="round" stroke-linejoin="round"/></svg>
<div class="t m" style="left:373.5px;top:288.02px;font-size:7.0px;line-height:9.4px;font-weight:400;color:#444;transform-origin:left center;transform:scaleX(0.8646);">URL inaccessi...</div>
<svg class="b" style="left:357.8px;top:301.59999999999997px;" width="12" height="12" viewBox="0 0 24 24" fill="none"><rect x="2.500" y="3.500" width="10.500" height="17" rx="3" stroke="#222" stroke-width="2" stroke-linecap="round" stroke-linejoin="round"/><path d="M15 12h7M19.500 9l2.800 3-2.800 3" stroke="#222" stroke-width="2" stroke-linecap="round" stroke-linejoin="round"/><path d="M8 10.500v3" stroke="#222" stroke-width="2" stroke-linecap="round" stroke-linejoin="round"/></svg>
<div class="t m" style="left:373.5px;top:303.02px;font-size:7.0px;line-height:9.4px;font-weight:400;color:#444;transform-origin:left center;transform:scaleX(0.8646);">URL inaccessi...</div>
<div class="b" style="left:432.4px;top:289.4px;width:22px;height:22px;background:#f9f9f9;border-radius:11px;"></div>
<svg class="b" style="left:438.79999999999995px;top:295.79999999999995px" width="9.2" height="9.2" viewBox="0 0 20 20"><defs><clipPath id="fc"><circle cx="10" cy="10" r="10"/></clipPath></defs><g clip-path="url(#fc)"><rect width="20" height="7" fill="#111"/><rect y="6.700" width="20" height="6.700" fill="#dd1a1a"/><rect y="13.300" width="20" height="7" fill="#ffce00"/></g><circle cx="10" cy="10" r="9.700" fill="none" stroke="rgba(0,0,0,.08)" stroke-width=".6"/></svg>
<div class="t " style="left:458.8px;top:292.02px;font-size:6.57px;line-height:8.88px;font-weight:700;color:#1c1c1c;transform-origin:left center;transform:scaleX(0.8607);">Returning visitor</div>
<div class="t " style="left:458.8px;top:301.02px;font-size:6.57px;line-height:8.88px;font-weight:400;color:#3d3d3d;transform-origin:left center;transform:scaleX(0.9222);">Germany</div>
<div class="b" style="left:517.4px;top:289.4px;width:22px;height:22px;background:#f9f9f9;border-radius:11px;"></div>
<svg class="b" style="left:522.5px;top:294.5px;" width="11.8" height="11.8" viewBox="0 0 24 24" fill="none"><circle cx="12" cy="12" r="10" stroke="#1c1c1c" stroke-width="3.300" stroke-linecap="round" stroke-dasharray="0.2 5.036" fill="none"/></svg>
<div class="t " style="left:544.5px;top:288.02px;font-size:6.57px;line-height:8.88px;font-weight:400;color:#3d3d3d;transform-origin:left center;transform:scaleX(0.9441);">Direct Page View of</div>
<div class="t " style="left:544.5px;top:297.02px;font-size:6.57px;line-height:8.88px;font-weight:400;color:#3d3d3d;transform-origin:left center;transform:scaleX(0.9400);">Recording's Entry</div>
<div class="t " style="left:544.5px;top:305.02px;font-size:6.57px;line-height:8.88px;font-weight:400;color:#3d3d3d;transform-origin:left center;transform:scaleX(0.9134);">Page</div>
<div class="b" style="left:618px;top:289.4px;width:22px;height:22px;background:#f9f9f9;border-radius:11px;"></div>
<div class="b" style="left:645.2px;top:289.4px;width:22px;height:22px;background:#f9f9f9;border-radius:11px;"></div>
<div class="b" style="left:672.4px;top:289.4px;width:22px;height:22px;background:#f9f9f9;border-radius:11px;"></div>
<svg class="b" style="left:623.05px;top:294.34999999999997px;" width="12.5" height="12.5" viewBox="0 0 24 24" fill="none"><rect x="2.500" y="4.500" width="19" height="12" rx="3.500" stroke="#4a4a4a" stroke-width="2" stroke-linecap="round" stroke-linejoin="round"/><path d="M6.500 20h11" stroke="#4a4a4a" stroke-width="2.4" stroke-linecap="round" stroke-linejoin="round"/></svg>
<svg class="b" style="left:650.65px;top:294.34999999999997px;" width="11.5" height="11.5" viewBox="0 0 24 24" fill="none"><path fill="#0a0a0a" d="M17.050 12.540c-.030-2.700 2.200-4 2.300-4.060-1.260-1.830-3.200-2.080-3.900-2.110-1.650-.170-3.230.980-4.070.980-.840 0-2.140-.960-3.510-.930-1.810.030-3.470 1.050-4.400 2.670-1.880 3.250-.480 8.070 1.350 10.710.890 1.290 1.960 2.740 3.350 2.690 1.350-.050 1.860-.870 3.480-.870 1.620 0 2.080.870 3.500.840 1.450-.030 2.370-1.320 3.250-2.610 1.030-1.500 1.450-2.950 1.470-3.020-.030-.010-2.820-1.080-2.850-4.290zM14.400 4.600c.740-.900 1.240-2.150 1.110-3.400-1.070.040-2.360.710-3.130 1.610-.690.800-1.290 2.070-1.130 3.300 1.190.090 2.410-.610 3.150-1.510z"/></svg>
<svg class="b" style="left:677.5px;top:294.5px;" width="11.8" height="11.8" viewBox="0 0 24 24" fill="none"><circle cx="12" cy="12" r="10" stroke="#1c1c1c" stroke-width="3.300" stroke-linecap="round" stroke-dasharray="0.2 5.036" fill="none"/></svg>
<div class="b" style="left:711.5px;top:288.9px;width:23.5px;height:23px;background:#540ab4;border-radius:5px;"></div>
<svg class="b" style="left:717.1999999999999px;top:294.29999999999995px;" width="12.2" height="12.2" viewBox="0 0 24 24" fill="none"><circle cx="12" cy="12" r="9.800" stroke="#fff" stroke-width="2" stroke-linecap="round" stroke-linejoin="round"/><path d="M10 8.200l5.800 3.800-5.800 3.800z" stroke="#fff" stroke-width="1.9" stroke-linecap="round" stroke-linejoin="round" fill="#fff"/></svg>
<div class="b" style="left:738.7px;top:288.9px;width:23px;height:23px;background:#fafafa;border-radius:6px;"></div>
<svg class="b" style="left:744.2px;top:294.4px;" width="12" height="12" viewBox="0 0 24 24" fill="none"><circle cx="12" cy="12" r="10" stroke="#111" stroke-width="2.1" stroke-linecap="round" stroke-linejoin="round"/><path d="M7.500 12h9" stroke="#111" stroke-width="2" stroke-linecap="round" stroke-linejoin="round"/></svg>
<div class="b" style="left:67.8px;top:327.0px;width:22px;height:22px;background:#f9f9f9;border-radius:11px;"></div>
<svg class="b" style="left:73.0px;top:332.2px;" width="11.6" height="11.6" viewBox="0 0 24 24" fill="none"><circle cx="12" cy="12" r="9.500" stroke="#4e10c0" stroke-width="2.4" stroke-linecap="round" stroke-linejoin="round"/><path d="M8 12.300l2.800 2.800 5.200-5.600" stroke="#4e10c0" stroke-width="2.4" stroke-linecap="round" stroke-linejoin="round"/></svg>
<div class="t " style="left:94.5px;top:329.02px;font-size:6.68px;line-height:9.02px;font-weight:700;color:#1c1c1c;transform-origin:left center;transform:scaleX(0.8922);">7A1CDDC0-11D5-4761...</div>
<div class="t " style="left:94.5px;top:338.02px;font-size:7.0px;line-height:9.4px;font-weight:400;color:#333;transform-origin:left center;transform:scaleX(0.8686);">01/31/2026, 10:28 AM</div>
<div class="t " style="left:189.2px;top:333.02px;font-size:8.37px;line-height:11.04px;font-weight:700;color:#111;width:40px;text-align:center;transform-origin:center center;transform:scaleX(0.8789);">00:10</div>
<svg class="b" style="left:263.65px;top:332.25px;" width="11.5" height="11.5" viewBox="0 0 24 24" fill="none"><path d="M20.500 10.500V5.500a2 2 0 0 0-2-2h-4.700a2 2 0 0 0-1.400.600L3.600 12.400a2 2 0 0 0 0 2.800l4.700 4.700a2 2 0 0 0 2.800 0l.900-.900" stroke="#4e10c0" stroke-width="2.6" stroke-linecap="round" stroke-linejoin="round"/><circle cx="16.200" cy="7.800" r="1.400" fill="#4e10c0"/><path d="M12.800 12.800l5.500 5.500" stroke="#4e10c0" stroke-width="2.4" stroke-linecap="round" stroke-linejoin="round"/><path d="M20.800 15.200v5.600h-5.600z" fill="#4e10c0" stroke="#4e10c0" stroke-width="1" stroke-linecap="round" stroke-linejoin="round"/></svg>
<div class="t " style="left:280.6px;top:333.02px;font-size:8.8px;line-height:11.56px;font-weight:700;color:#4e10c0;transform-origin:left center;transform:scaleX(0.8764);">2</div>
<svg class="b" style="left:323.65px;top:332.25px;" width="11.5" height="11.5" viewBox="0 0 24 24" fill="none"><path d="M12 2.500l9 4.300-9 4.300-9-4.300z" stroke="#4e10c0" stroke-width="2.6" stroke-linecap="round" stroke-linejoin="round" fill="#4e10c0" fill-opacity=".25"/><path d="M3.200 11.800l8.800 4.200 8.800-4.200M3.200 16.800l8.800 4.200 8.800-4.200" stroke="#4e10c0" stroke-width="2.6" stroke-linecap="round" stroke-linejoin="round"/></svg>
<div class="t " style="left:340.7px;top:333.02px;font-size:8.8px;line-height:11.56px;font-weight:700;color:#4e10c0;transform-origin:left center;transform:scaleX(0.8764);">3</div>
<svg class="b" style="left:357.8px;top:324.9px;" width="12" height="12" viewBox="0 0 24 24" fill="none"><rect x="10.500" y="4" width="10.500" height="16" rx="3" stroke="#222" stroke-width="2" stroke-linecap="round" stroke-linejoin="round"/><path d="M1.500 12h7M6 9l2.800 3-2.800 3" stroke="#222" stroke-width="2" stroke-linecap="round" stroke-linejoin="round"/><path d="M16 10.500v3" stroke="#222" stroke-width="2" stroke-linecap="round" stroke-linejoin="round"/></svg>
<div class="t m" style="left:373.5px;top:326.02px;font-size:7.0px;line-height:9.4px;font-weight:400;color:#444;transform-origin:left center;transform:scaleX(0.8646);">URL inaccessi...</div>
<svg class="b" style="left:357.8px;top:339.2px;" width="12" height="12" viewBox="0 0 24 24" fill="none"><rect x="2.500" y="3.500" width="10.500" height="17" rx="3" stroke="#222" stroke-width="2" stroke-linecap="round" stroke-linejoin="round"/><path d="M15 12h7M19.500 9l2.800 3-2.800 3" stroke="#222" stroke-width="2" stroke-linecap="round" stroke-linejoin="round"/><path d="M8 10.500v3" stroke="#222" stroke-width="2" stroke-linecap="round" stroke-linejoin="round"/></svg>
<div class="t m" style="left:373.5px;top:341.02px;font-size:7.0px;line-height:9.4px;font-weight:400;color:#444;transform-origin:left center;transform:scaleX(0.8646);">URL inaccessi...</div>
<div class="b" style="left:432.4px;top:327.0px;width:22px;height:22px;background:#f9f9f9;border-radius:11px;"></div>
<svg class="b" style="left:438.79999999999995px;top:333.4px" width="9.2" height="9.2" viewBox="0 0 20 20"><defs><clipPath id="fc"><circle cx="10" cy="10" r="10"/></clipPath></defs><g clip-path="url(#fc)"><rect width="20" height="7" fill="#b5202f"/><rect y="6.700" width="20" height="6.700" fill="#fff"/><rect y="13.300" width="20" height="7" fill="#23468a"/></g><circle cx="10" cy="10" r="9.700" fill="none" stroke="rgba(0,0,0,.08)" stroke-width=".6"/></svg>
<div class="t " style="left:458.8px;top:329.02px;font-size:6.57px;line-height:8.88px;font-weight:700;color:#1c1c1c;transform-origin:left center;transform:scaleX(0.8607);">Returning visitor</div>
<div class="t " style="left:458.8px;top:338.02px;font-size:6.57px;line-height:8.88px;font-weight:400;color:#3d3d3d;transform-origin:left center;transform:scaleX(0.9607);">Netherlands</div>
<div class="b" style="left:517.4px;top:327.0px;width:22px;height:22px;background:#f9f9f9;border-radius:11px;"></div>
<svg class="b" style="left:522.5px;top:332.1px;" width="11.8" height="11.8" viewBox="0 0 24 24" fill="none"><circle cx="12" cy="12" r="10" stroke="#1c1c1c" stroke-width="3.300" stroke-linecap="round" stroke-dasharray="0.2 5.036" fill="none"/></svg>
<div class="t " style="left:544.5px;top:326.02px;font-size:6.57px;line-height:8.88px;font-weight:400;color:#3d3d3d;transform-origin:left center;transform:scaleX(0.9441);">Direct Page View of</div>
<div class="t " style="left:544.5px;top:334.02px;font-size:6.57px;line-height:8.88px;font-weight:400;color:#3d3d3d;transform-origin:left center;transform:scaleX(0.9400);">Recording's Entry</div>
<div class="t " style="left:544.5px;top:343.02px;font-size:6.57px;line-height:8.88px;font-weight:400;color:#3d3d3d;transform-origin:left center;transform:scaleX(0.9134);">Page</div>
<div class="b" style="left:618px;top:327.0px;width:22px;height:22px;background:#f9f9f9;border-radius:11px;"></div>
<div class="b" style="left:645.2px;top:327.0px;width:22px;height:22px;background:#f9f9f9;border-radius:11px;"></div>
<div class="b" style="left:672.4px;top:327.0px;width:22px;height:22px;background:#f9f9f9;border-radius:11px;"></div>
<svg class="b" style="left:623.05px;top:331.95px;" width="12.5" height="12.5" viewBox="0 0 24 24" fill="none"><rect x="2.500" y="4.500" width="19" height="12" rx="3.500" stroke="#4a4a4a" stroke-width="2" stroke-linecap="round" stroke-linejoin="round"/><path d="M6.500 20h11" stroke="#4a4a4a" stroke-width="2.4" stroke-linecap="round" stroke-linejoin="round"/></svg>
<svg class="b" style="left:650.65px;top:331.95px;" width="11.5" height="11.5" viewBox="0 0 24 24" fill="none"><path fill="#0a0a0a" d="M17.050 12.540c-.030-2.700 2.200-4 2.300-4.060-1.260-1.830-3.200-2.080-3.900-2.110-1.650-.170-3.230.980-4.070.980-.840 0-2.140-.960-3.510-.930-1.810.030-3.470 1.050-4.400 2.670-1.880 3.250-.480 8.070 1.350 10.710.890 1.290 1.960 2.740 3.350 2.690 1.350-.050 1.860-.870 3.480-.870 1.620 0 2.080.870 3.500.840 1.450-.030 2.370-1.320 3.250-2.610 1.030-1.500 1.450-2.950 1.470-3.020-.030-.010-2.820-1.080-2.850-4.290zM14.400 4.600c.740-.900 1.240-2.150 1.110-3.400-1.070.040-2.360.710-3.130 1.610-.690.800-1.290 2.070-1.130 3.300 1.190.090 2.410-.610 3.150-1.510z"/></svg>
<svg class="b" style="left:677.5px;top:332.1px;" width="11.8" height="11.8" viewBox="0 0 24 24" fill="none"><circle cx="12" cy="12" r="10" stroke="#1c1c1c" stroke-width="3.300" stroke-linecap="round" stroke-dasharray="0.2 5.036" fill="none"/></svg>
<div class="b" style="left:711.5px;top:326.5px;width:23.5px;height:23px;background:#540ab4;border-radius:5px;"></div>
<svg class="b" style="left:717.1999999999999px;top:331.9px;" width="12.2" height="12.2" viewBox="0 0 24 24" fill="none"><circle cx="12" cy="12" r="9.800" stroke="#fff" stroke-width="2" stroke-linecap="round" stroke-linejoin="round"/><path d="M10 8.200l5.800 3.800-5.800 3.800z" stroke="#fff" stroke-width="1.9" stroke-linecap="round" stroke-linejoin="round" fill="#fff"/></svg>
<div class="b" style="left:738.7px;top:326.5px;width:23px;height:23px;background:#fafafa;border-radius:6px;"></div>
<svg class="b" style="left:744.2px;top:332.0px;" width="12" height="12" viewBox="0 0 24 24" fill="none"><circle cx="12" cy="12" r="10" stroke="#111" stroke-width="2.1" stroke-linecap="round" stroke-linejoin="round"/><path d="M7.500 12h9" stroke="#111" stroke-width="2" stroke-linecap="round" stroke-linejoin="round"/></svg>
<div class="b" style="left:67.8px;top:364.1px;width:22px;height:22px;background:#f9f9f9;border-radius:11px;"></div>
<svg class="b" style="left:73.0px;top:369.3px;" width="11.6" height="11.6" viewBox="0 0 24 24" fill="none"><circle cx="12" cy="12" r="9.500" stroke="#4e10c0" stroke-width="2.4" stroke-linecap="round" stroke-linejoin="round"/><path d="M8 12.300l2.800 2.800 5.200-5.600" stroke="#4e10c0" stroke-width="2.4" stroke-linecap="round" stroke-linejoin="round"/></svg>
<div class="t " style="left:94.5px;top:366.02px;font-size:6.68px;line-height:9.02px;font-weight:700;color:#1c1c1c;transform-origin:left center;transform:scaleX(0.9284);">68F6DE28-764F-473E...</div>
<div class="t " style="left:94.5px;top:375.02px;font-size:7.0px;line-height:9.4px;font-weight:400;color:#333;transform-origin:left center;transform:scaleX(0.8686);">01/31/2026, 10:25 AM</div>
<div class="t " style="left:189.2px;top:371.02px;font-size:8.37px;line-height:11.04px;font-weight:700;color:#111;width:40px;text-align:center;transform-origin:center center;transform:scaleX(0.8789);">18:49</div>
<svg class="b" style="left:263.65px;top:369.35px;" width="11.5" height="11.5" viewBox="0 0 24 24" fill="none"><path d="M20.500 10.500V5.500a2 2 0 0 0-2-2h-4.700a2 2 0 0 0-1.400.600L3.600 12.400a2 2 0 0 0 0 2.800l4.700 4.700a2 2 0 0 0 2.800 0l.900-.900" stroke="#4e10c0" stroke-width="2.6" stroke-linecap="round" stroke-linejoin="round"/><circle cx="16.200" cy="7.800" r="1.400" fill="#4e10c0"/><path d="M12.800 12.800l5.500 5.500" stroke="#4e10c0" stroke-width="2.4" stroke-linecap="round" stroke-linejoin="round"/><path d="M20.800 15.200v5.600h-5.600z" fill="#4e10c0" stroke="#4e10c0" stroke-width="1" stroke-linecap="round" stroke-linejoin="round"/></svg>
<div class="t " style="left:280.6px;top:370.02px;font-size:8.8px;line-height:11.56px;font-weight:700;color:#4e10c0;transform-origin:left center;transform:scaleX(0.8764);">0</div>
<svg class="b" style="left:323.65px;top:369.35px;" width="11.5" height="11.5" viewBox="0 0 24 24" fill="none"><path d="M12 2.500l9 4.300-9 4.300-9-4.300z" stroke="#4e10c0" stroke-width="2.6" stroke-linecap="round" stroke-linejoin="round" fill="#4e10c0" fill-opacity=".25"/><path d="M3.200 11.800l8.800 4.200 8.800-4.200M3.200 16.800l8.800 4.200 8.800-4.200" stroke="#4e10c0" stroke-width="2.6" stroke-linecap="round" stroke-linejoin="round"/></svg>
<div class="t " style="left:340.7px;top:370.02px;font-size:8.8px;line-height:11.56px;font-weight:700;color:#4e10c0;transform-origin:left center;transform:scaleX(0.8764);">1</div>
<svg class="b" style="left:357.8px;top:362.0px;" width="12" height="12" viewBox="0 0 24 24" fill="none"><rect x="10.500" y="4" width="10.500" height="16" rx="3" stroke="#222" stroke-width="2" stroke-linecap="round" stroke-linejoin="round"/><path d="M1.500 12h7M6 9l2.800 3-2.800 3" stroke="#222" stroke-width="2" stroke-linecap="round" stroke-linejoin="round"/><path d="M16 10.500v3" stroke="#222" stroke-width="2" stroke-linecap="round" stroke-linejoin="round"/></svg>
<div class="t m" style="left:373.5px;top:363.02px;font-size:7.0px;line-height:9.4px;font-weight:400;color:#444;transform-origin:left center;transform:scaleX(0.8646);">URL inaccessi...</div>
<svg class="b" style="left:357.8px;top:376.3px;" width="12" height="12" viewBox="0 0 24 24" fill="none"><rect x="2.500" y="3.500" width="10.500" height="17" rx="3" stroke="#222" stroke-width="2" stroke-linecap="round" stroke-linejoin="round"/><path d="M15 12h7M19.500 9l2.800 3-2.800 3" stroke="#222" stroke-width="2" stroke-linecap="round" stroke-linejoin="round"/><path d="M8 10.500v3" stroke="#222" stroke-width="2" stroke-linecap="round" stroke-linejoin="round"/></svg>
<div class="t m" style="left:373.5px;top:378.02px;font-size:7.0px;line-height:9.4px;font-weight:400;color:#444;transform-origin:left center;transform:scaleX(0.8646);">URL inaccessi...</div>
<div class="b" style="left:432.4px;top:364.1px;width:22px;height:22px;background:#f9f9f9;border-radius:11px;"></div>
<svg class="b" style="left:438.79999999999995px;top:370.5px" width="9.2" height="9.2" viewBox="0 0 20 20"><defs><clipPath id="fc"><circle cx="10" cy="10" r="10"/></clipPath></defs><g clip-path="url(#fc)"><rect width="20" height="20" fill="#fff"/><rect y="0.00" width="20" height="1.540" fill="#c8363f"/><rect y="3.08" width="20" height="1.540" fill="#c8363f"/><rect y="6.16" width="20" height="1.540" fill="#c8363f"/><rect y="9.24" width="20" height="1.540" fill="#c8363f"/><rect y="12.32" width="20" height="1.540" fill="#c8363f"/><rect y="15.40" width="20" height="1.540" fill="#c8363f"/><rect y="18.48" width="20" height="1.540" fill="#c8363f"/><rect width="10" height="10.700" fill="#3c4a8c"/></g><circle cx="10" cy="10" r="9.700" fill="none" stroke="rgba(0,0,0,.08)" stroke-width=".6"/></svg>
<div class="t " style="left:458.8px;top:366.02px;font-size:6.57px;line-height:8.88px;font-weight:700;color:#1c1c1c;transform-origin:left center;transform:scaleX(0.8910);">New visitor</div>
<div class="t " style="left:458.8px;top:375.02px;font-size:6.57px;line-height:8.88px;font-weight:400;color:#3d3d3d;transform-origin:left center;transform:scaleX(0.9516);">United States</div>
<div class="b" style="left:517.4px;top:364.1px;width:22px;height:22px;background:#f9f9f9;border-radius:11px;"></div>
<svg class="b" style="left:523.9px;top:370.6px;" width="9" height="9" viewBox="0 0 24 24" fill="none"><path fill="#4285F4" d="M22.560 12.250c0-.780-.070-1.530-.200-2.250H12v4.260h5.920c-.260 1.370-1.040 2.530-2.210 3.310v2.770h3.570c2.080-1.920 3.280-4.740 3.280-8.090z"/><path fill="#34A853" d="M12 23c2.970 0 5.460-.980 7.280-2.660l-3.570-2.770c-.980.660-2.230 1.060-3.710 1.060-2.860 0-5.290-1.930-6.160-4.530H2.180v2.840C3.990 20.530 7.700 23 12 23z"/><path fill="#FBBC05" d="M5.840 14.090c-.220-.660-.350-1.360-.350-2.090s.130-1.430.350-2.090V7.070H2.180C1.430 8.550 1 10.220 1 12s.430 3.450 1.180 4.930l3.660-2.840z"/><path fill="#EA4335" d="M12 5.380c1.620 0 3.060.560 4.210 1.640l3.150-3.150C17.450 2.090 14.970 1 12 1 7.700 1 3.990 3.470 2.180 7.070l3.660 2.840c.870-2.600 3.300-4.530 6.160-4.530z"/></svg>
<div class="t m" style="left:544.4px;top:371.02px;font-size:6.78px;line-height:9.14px;font-weight:400;color:#444;transform-origin:left center;transform:scaleX(0.9387);">google.com/</div>
<div class="b" style="left:618px;top:364.1px;width:22px;height:22px;background:#f9f9f9;border-radius:11px;"></div>
<div class="b" style="left:645.2px;top:364.1px;width:22px;height:22px;background:#f9f9f9;border-radius:11px;"></div>
<div class="b" style="left:672.4px;top:364.1px;width:22px;height:22px;background:#f9f9f9;border-radius:11px;"></div>
<svg class="b" style="left:623.05px;top:369.05px;" width="12.5" height="12.5" viewBox="0 0 24 24" fill="none"><rect x="2.500" y="4.500" width="19" height="12" rx="3.500" stroke="#4a4a4a" stroke-width="2" stroke-linecap="round" stroke-linejoin="round"/><path d="M6.500 20h11" stroke="#4a4a4a" stroke-width="2.4" stroke-linecap="round" stroke-linejoin="round"/></svg>
<svg class="b" style="left:650.65px;top:369.05px;" width="11.5" height="11.5" viewBox="0 0 24 24" fill="none"><path fill="#0a0a0a" d="M17.050 12.540c-.030-2.700 2.200-4 2.300-4.060-1.260-1.830-3.200-2.080-3.900-2.110-1.650-.170-3.230.980-4.070.980-.840 0-2.140-.960-3.510-.930-1.810.030-3.470 1.050-4.400 2.670-1.880 3.250-.480 8.070 1.350 10.710.890 1.290 1.960 2.740 3.350 2.690 1.350-.050 1.860-.870 3.480-.870 1.620 0 2.080.870 3.500.840 1.450-.030 2.370-1.320 3.250-2.610 1.030-1.500 1.450-2.950 1.470-3.020-.030-.010-2.820-1.080-2.850-4.290zM14.400 4.600c.740-.900 1.240-2.150 1.110-3.400-1.070.040-2.360.710-3.130 1.610-.690.800-1.290 2.070-1.130 3.300 1.190.090 2.410-.610 3.150-1.510z"/></svg>
<svg class="b" style="left:678.6px;top:370.3px;" width="9.6" height="9.6" viewBox="0 0 24 24" fill="none"><circle cx="12" cy="12" r="11.500" fill="#2d9bf0"/><circle cx="12" cy="12" r="11.500" fill="none" stroke="#1a7fd6" stroke-width="1"/><path d="M18 6l-4.500 7.500-3-3z" fill="#ff4b3a"/><path d="M6 18l4.500-7.500 3 3z" fill="#fff"/></svg>
<div class="b" style="left:711.5px;top:363.6px;width:23.5px;height:23px;background:#540ab4;border-radius:5px;"></div>
<svg class="b" style="left:717.1999999999999px;top:369.0px;" width="12.2" height="12.2" viewBox="0 0 24 24" fill="none"><circle cx="12" cy="12" r="9.800" stroke="#fff" stroke-width="2" stroke-linecap="round" stroke-linejoin="round"/><path d="M10 8.200l5.800 3.800-5.800 3.800z" stroke="#fff" stroke-width="1.9" stroke-linecap="round" stroke-linejoin="round" fill="#fff"/></svg>
<div class="b" style="left:738.7px;top:363.6px;width:23px;height:23px;background:#fafafa;border-radius:6px;"></div>
<svg class="b" style="left:744.2px;top:369.1px;" width="12" height="12" viewBox="0 0 24 24" fill="none"><circle cx="12" cy="12" r="10" stroke="#111" stroke-width="2.1" stroke-linecap="round" stroke-linejoin="round"/><path d="M7.500 12h9" stroke="#111" stroke-width="2" stroke-linecap="round" stroke-linejoin="round"/></svg>
<div class="b" style="left:67.8px;top:400.3px;width:22px;height:22px;background:#f9f9f9;border-radius:11px;"></div>
<svg class="b" style="left:73.0px;top:405.5px;" width="11.6" height="11.6" viewBox="0 0 24 24" fill="none"><circle cx="12" cy="12" r="9.500" stroke="#4e10c0" stroke-width="2.4" stroke-linecap="round" stroke-linejoin="round"/><path d="M8 12.300l2.800 2.800 5.200-5.600" stroke="#4e10c0" stroke-width="2.4" stroke-linecap="round" stroke-linejoin="round"/></svg>
<div class="t " style="left:94.5px;top:402.02px;font-size:6.68px;line-height:9.02px;font-weight:700;color:#1c1c1c;transform-origin:left center;transform:scaleX(0.9009);">EF76572A-DC6B-4174...</div>
<div class="t " style="left:94.5px;top:411.02px;font-size:7.0px;line-height:9.4px;font-weight:400;color:#333;transform-origin:left center;transform:scaleX(0.8686);">01/31/2026, 10:15 AM</div>
<div class="t " style="left:189.2px;top:407.02px;font-size:8.37px;line-height:11.04px;font-weight:700;color:#111;width:40px;text-align:center;transform-origin:center center;transform:scaleX(0.8789);">00:15</div>
<svg class="b" style="left:263.65px;top:405.55px;" width="11.5" height="11.5" viewBox="0 0 24 24" fill="none"><path d="M20.500 10.500V5.500a2 2 0 0 0-2-2h-4.700a2 2 0 0 0-1.400.600L3.600 12.400a2 2 0 0 0 0 2.800l4.700 4.700a2 2 0 0 0 2.800 0l.900-.900" stroke="#4e10c0" stroke-width="2.6" stroke-linecap="round" stroke-linejoin="round"/><circle cx="16.200" cy="7.800" r="1.400" fill="#4e10c0"/><path d="M12.800 12.800l5.500 5.500" stroke="#4e10c0" stroke-width="2.4" stroke-linecap="round" stroke-linejoin="round"/><path d="M20.800 15.200v5.600h-5.600z" fill="#4e10c0" stroke="#4e10c0" stroke-width="1" stroke-linecap="round" stroke-linejoin="round"/></svg>
<div class="t " style="left:280.6px;top:406.02px;font-size:8.8px;line-height:11.56px;font-weight:700;color:#4e10c0;transform-origin:left center;transform:scaleX(0.8764);">0</div>
<svg class="b" style="left:323.65px;top:405.55px;" width="11.5" height="11.5" viewBox="0 0 24 24" fill="none"><path d="M12 2.500l9 4.300-9 4.300-9-4.300z" stroke="#4e10c0" stroke-width="2.6" stroke-linecap="round" stroke-linejoin="round" fill="#4e10c0" fill-opacity=".25"/><path d="M3.200 11.800l8.800 4.200 8.800-4.200M3.200 16.800l8.800 4.200 8.800-4.200" stroke="#4e10c0" stroke-width="2.6" stroke-linecap="round" stroke-linejoin="round"/></svg>
<div class="t " style="left:340.7px;top:406.02px;font-size:8.8px;line-height:11.56px;font-weight:700;color:#4e10c0;transform-origin:left center;transform:scaleX(0.8764);">1</div>
<svg class="b" style="left:357.8px;top:398.2px;" width="12" height="12" viewBox="0 0 24 24" fill="none"><rect x="10.500" y="4" width="10.500" height="16" rx="3" stroke="#222" stroke-width="2" stroke-linecap="round" stroke-linejoin="round"/><path d="M1.500 12h7M6 9l2.800 3-2.800 3" stroke="#222" stroke-width="2" stroke-linecap="round" stroke-linejoin="round"/><path d="M16 10.500v3" stroke="#222" stroke-width="2" stroke-linecap="round" stroke-linejoin="round"/></svg>
<div class="t m" style="left:373.5px;top:399.02px;font-size:7.0px;line-height:9.4px;font-weight:400;color:#444;transform-origin:left center;transform:scaleX(0.8646);">URL inaccessi...</div>
<svg class="b" style="left:357.8px;top:412.5px;" width="12" height="12" viewBox="0 0 24 24" fill="none"><rect x="2.500" y="3.500" width="10.500" height="17" rx="3" stroke="#222" stroke-width="2" stroke-linecap="round" stroke-linejoin="round"/><path d="M15 12h7M19.500 9l2.800 3-2.800 3" stroke="#222" stroke-width="2" stroke-linecap="round" stroke-linejoin="round"/><path d="M8 10.500v3" stroke="#222" stroke-width="2" stroke-linecap="round" stroke-linejoin="round"/></svg>
<div class="t m" style="left:373.5px;top:414.02px;font-size:7.0px;line-height:9.4px;font-weight:400;color:#444;transform-origin:left center;transform:scaleX(0.8646);">URL inaccessi...</div>
<div class="b" style="left:432.4px;top:400.3px;width:22px;height:22px;background:#f9f9f9;border-radius:11px;"></div>
<svg class="b" style="left:438.79999999999995px;top:406.7px" width="9.2" height="9.2" viewBox="0 0 20 20"><defs><clipPath id="fc"><circle cx="10" cy="10" r="10"/></clipPath></defs><g clip-path="url(#fc)"><rect width="20" height="7" fill="#111"/><rect y="6.700" width="20" height="6.700" fill="#dd1a1a"/><rect y="13.300" width="20" height="7" fill="#ffce00"/></g><circle cx="10" cy="10" r="9.700" fill="none" stroke="rgba(0,0,0,.08)" stroke-width=".6"/></svg>
<div class="t " style="left:458.8px;top:403.02px;font-size:6.57px;line-height:8.88px;font-weight:700;color:#1c1c1c;transform-origin:left center;transform:scaleX(0.8910);">New visitor</div>
<div class="t " style="left:458.8px;top:412.02px;font-size:6.57px;line-height:8.88px;font-weight:400;color:#3d3d3d;transform-origin:left center;transform:scaleX(0.9222);">Germany</div>
<div class="b" style="left:517.4px;top:400.3px;width:22px;height:22px;background:#f9f9f9;border-radius:11px;"></div>
<svg class="b" style="left:523.9px;top:406.8px;" width="9" height="9" viewBox="0 0 24 24" fill="none"><path fill="#4285F4" d="M22.560 12.250c0-.780-.070-1.530-.200-2.250H12v4.260h5.920c-.260 1.370-1.040 2.530-2.210 3.310v2.770h3.570c2.080-1.920 3.280-4.740 3.280-8.090z"/><path fill="#34A853" d="M12 23c2.970 0 5.460-.980 7.280-2.660l-3.570-2.770c-.980.660-2.230 1.060-3.710 1.060-2.860 0-5.290-1.930-6.160-4.530H2.180v2.840C3.990 20.530 7.700 23 12 23z"/><path fill="#FBBC05" d="M5.840 14.090c-.220-.660-.350-1.360-.350-2.090s.130-1.430.350-2.090V7.070H2.180C1.430 8.550 1 10.220 1 12s.430 3.450 1.180 4.930l3.660-2.840z"/><path fill="#EA4335" d="M12 5.380c1.620 0 3.060.560 4.210 1.640l3.150-3.150C17.450 2.090 14.970 1 12 1 7.700 1 3.990 3.470 2.180 7.070l3.660 2.840c.870-2.600 3.300-4.530 6.160-4.530z"/></svg>
<div class="t m" style="left:544.4px;top:407.02px;font-size:6.78px;line-height:9.14px;font-weight:400;color:#444;transform-origin:left center;transform:scaleX(0.9387);">google.com/</div>
<div class="b" style="left:618px;top:400.3px;width:22px;height:22px;background:#f9f9f9;border-radius:11px;"></div>
<div class="b" style="left:645.2px;top:400.3px;width:22px;height:22px;background:#f9f9f9;border-radius:11px;"></div>
<div class="b" style="left:672.4px;top:400.3px;width:22px;height:22px;background:#f9f9f9;border-radius:11px;"></div>
<svg class="b" style="left:623.3px;top:405.3px;" width="12" height="12" viewBox="0 0 24 24" fill="none"><rect x="6.500" y="2.500" width="11" height="19" rx="3" stroke="#333" stroke-width="2.1" stroke-linecap="round" stroke-linejoin="round"/><path d="M10.500 5.800h3" stroke="#333" stroke-width="1.8" stroke-linecap="round" stroke-linejoin="round"/></svg>
<svg class="b" style="left:650.65px;top:405.25px;" width="11.5" height="11.5" viewBox="0 0 24 24" fill="none"><path fill="#0a0a0a" d="M17.050 12.540c-.030-2.700 2.200-4 2.300-4.060-1.260-1.830-3.200-2.080-3.900-2.110-1.650-.170-3.230.980-4.070.980-.840 0-2.140-.960-3.510-.930-1.810.030-3.470 1.050-4.400 2.670-1.880 3.250-.480 8.070 1.350 10.710.890 1.290 1.960 2.740 3.350 2.690 1.350-.050 1.860-.870 3.480-.870 1.620 0 2.080.870 3.500.840 1.450-.030 2.370-1.320 3.250-2.610 1.030-1.500 1.450-2.950 1.470-3.020-.030-.010-2.820-1.080-2.850-4.290zM14.400 4.600c.740-.900 1.240-2.150 1.110-3.400-1.070.040-2.360.710-3.130 1.610-.690.800-1.290 2.070-1.130 3.300 1.190.090 2.410-.610 3.150-1.510z"/></svg>
<svg class="b" style="left:678.6px;top:406.5px;" width="9.6" height="9.6" viewBox="0 0 24 24" fill="none"><circle cx="12" cy="12" r="11.500" fill="#2d9bf0"/><circle cx="12" cy="12" r="11.500" fill="none" stroke="#1a7fd6" stroke-width="1"/><path d="M18 6l-4.500 7.500-3-3z" fill="#ff4b3a"/><path d="M6 18l4.500-7.500 3 3z" fill="#fff"/></svg>
<div class="b" style="left:711.5px;top:399.8px;width:23.5px;height:23px;background:#540ab4;border-radius:5px;"></div>
<svg class="b" style="left:717.1999999999999px;top:405.2px;" width="12.2" height="12.2" viewBox="0 0 24 24" fill="none"><circle cx="12" cy="12" r="9.800" stroke="#fff" stroke-width="2" stroke-linecap="round" stroke-linejoin="round"/><path d="M10 8.200l5.800 3.800-5.800 3.800z" stroke="#fff" stroke-width="1.9" stroke-linecap="round" stroke-linejoin="round" fill="#fff"/></svg>
<div class="b" style="left:738.7px;top:399.8px;width:23px;height:23px;background:#fafafa;border-radius:6px;"></div>
<svg class="b" style="left:744.2px;top:405.3px;" width="12" height="12" viewBox="0 0 24 24" fill="none"><circle cx="12" cy="12" r="10" stroke="#111" stroke-width="2.1" stroke-linecap="round" stroke-linejoin="round"/><path d="M7.500 12h9" stroke="#111" stroke-width="2" stroke-linecap="round" stroke-linejoin="round"/></svg>
<div class="b" style="left:59.3px;top:152px;width:101.5px;height:27px;background:#f8f8f8;border-radius:0px;border:2.300px solid #fb6a17;box-sizing:border-box;"></div>
<svg class="b" style="left:66.7px;top:161.1px;" width="9" height="9" viewBox="0 0 24 24" fill="none"><circle cx="12" cy="12" r="10" stroke="#e8262a" stroke-width="2.6" stroke-linecap="round" stroke-linejoin="round"/><path d="M7.500 12h9" stroke="#e8262a" stroke-width="2.8" stroke-linecap="round" stroke-linejoin="round"/></svg>
<div class="t m" style="left:80.8px;top:162.02px;font-size:6.57px;line-height:8.88px;font-weight:400;color:#1c1c1c;transform-origin:left center;transform:scaleX(0.9513);">All 3194 items selected</div>
<svg class="b" style="left:146.6px;top:163.1px;" width="4.8" height="4.8" viewBox="0 0 24 24" fill="none"><path d="M5 8l7 7 7-7" stroke="#444" stroke-width="3" stroke-linecap="round" stroke-linejoin="round"/></svg>
<div class="b" style="left:166.5px;top:181px;width:147px;height:124.5px;background:#ffffff;border-radius:3px;box-shadow:0 1px 5px rgba(0,0,0,.13);"></div>
<div class="b" style="left:162.7px;top:152px;width:154.3px;height:155.2px;background:transparent;border-radius:0px;border:2.300px solid #fb6a17;box-sizing:border-box;"></div>
<div class="b" style="left:165px;top:154px;width:149.4px;height:26px;background:#ffffff;border-radius:0px;"></div>
<div class="b" style="left:166.2px;top:155.2px;width:78.6px;height:22.7px;background:#efefef;border-radius:0px;border:1px solid #fb6a17;box-sizing:border-box;box-shadow:inset 0 0 0 1px #eef6f8;"></div>
<svg class="b" style="left:169.6px;top:160.6px;" width="10.8" height="10.8" viewBox="0 0 24 24" fill="none"><circle cx="12" cy="12" r="3.600" stroke="#111" stroke-width="2.4" stroke-linecap="round" stroke-linejoin="round"/><path d="M19.4 15a1.65 1.65 0 0 0 .33 1.82l.06.06a2 2 0 0 1 0 2.83 2 2 0 0 1-2.83 0l-.06-.06a1.65 1.65 0 0 0-1.82-.33 1.65 1.65 0 0 0-1 1.51V21a2 2 0 0 1-2 2 2 2 0 0 1-2-2v-.09A1.65 1.65 0 0 0 9 19.4a1.65 1.65 0 0 0-1.82.33l-.06.06a2 2 0 0 1-2.83 0 2 2 0 0 1 0-2.83l.06-.06a1.65 1.65 0 0 0 .33-1.82 1.65 1.65 0 0 0-1.51-1H3a2 2 0 0 1-2-2 2 2 0 0 1 2-2h.09A1.65 1.65 0 0 0 4.6 9a1.65 1.65 0 0 0-.33-1.82l-.06-.06a2 2 0 0 1 0-2.83 2 2 0 0 1 2.83 0l.06.06a1.65 1.65 0 0 0 1.82.33H9a1.65 1.65 0 0 0 1-1.51V3a2 2 0 0 1 2-2 2 2 0 0 1 2 2v.09a1.65 1.65 0 0 0 1 1.51 1.65 1.65 0 0 0 1.82-.33l.06-.06a2 2 0 0 1 2.83 0 2 2 0 0 1 0 2.83l-.06.06a1.65 1.65 0 0 0-.33 1.82V9a1.65 1.65 0 0 0 1.51 1H21a2 2 0 0 1 2 2 2 2 0 0 1-2 2h-.09a1.65 1.65 0 0 0-1.51 1z" stroke="#111" stroke-width="2.5" stroke-linecap="round" stroke-linejoin="round"/></svg>
<div class="t m" style="left:186px;top:162.02px;font-size:6.57px;line-height:8.88px;font-weight:400;color:#1c1c1c;transform-origin:left center;transform:scaleX(0.9562);">Select an Action</div>
<svg class="b" style="left:232.6px;top:163.29999999999998px;" width="4.8" height="4.8" viewBox="0 0 24 24" fill="none"><path d="M5 15l7-7 7 7" stroke="#444" stroke-width="3" stroke-linecap="round" stroke-linejoin="round"/></svg>
<svg class="b" style="left:173.15px;top:191.75px;" width="10.5" height="10.5" viewBox="0 0 24 24" fill="none"><path d="M12 2.800l2.850 5.800 6.400.930-4.630 4.500 1.090 6.370L12 17.400l-5.720 3 1.090-6.370-4.630-4.500 6.400-.930z" stroke="#333" stroke-width="1.8" stroke-linecap="round" stroke-linejoin="round"/></svg>
<div class="t m" style="left:189.7px;top:193.02px;font-size:6.57px;line-height:8.88px;font-weight:400;color:#1c1c1c;transform-origin:left center;transform:scaleX(0.9371);">Mark as Favorite</div>
<svg class="b" style="left:173.15px;top:214.95px;" width="10.5" height="10.5" viewBox="0 0 24 24" fill="none"><path d="M12 2.800l2.850 5.800 6.400.930-4.630 4.500 1.090 6.370L12 17.400l-5.720 3 1.090-6.370-4.630-4.500 6.400-.930z" stroke="#333" stroke-width="1.8" stroke-linecap="round" stroke-linejoin="round"/><path d="M11.500 22L18.300 5.500" stroke="#fff" stroke-width="5"/><path d="M7.750 22.500L15.800 3M15.300 20.500L20.400 8.500" stroke="#333" stroke-width="1.8" stroke-linecap="round" stroke-linejoin="round"/></svg>
<div class="t m" style="left:189.7px;top:216.02px;font-size:6.57px;line-height:8.88px;font-weight:400;color:#1c1c1c;transform-origin:left center;transform:scaleX(0.9342);">Unmark as Favorite</div>
<svg class="b" style="left:172.75px;top:237.75px;" width="10.5" height="10.5" viewBox="0 0 24 24" fill="none"><circle cx="12" cy="12" r="10" stroke="#444" stroke-width="1.8" stroke-linecap="round" stroke-linejoin="round"/><path d="M8 12.300l2.800 2.800 5.200-5.600" stroke="#444" stroke-width="1.8" stroke-linecap="round" stroke-linejoin="round"/></svg>
<div class="t m" style="left:188.5px;top:239.02px;font-size:6.57px;line-height:8.88px;font-weight:400;color:#1c1c1c;transform-origin:left center;transform:scaleX(0.9522);">Mark as Watched</div>
<svg class="b" style="left:172.75px;top:260.75px;" width="10.5" height="10.5" viewBox="0 0 24 24" fill="none"><circle cx="12" cy="12" r="10" stroke="#444" stroke-width="1.8" stroke-linecap="round" stroke-linejoin="round"/></svg>
<div class="t m" style="left:188.5px;top:262.02px;font-size:6.57px;line-height:8.88px;font-weight:400;color:#1c1c1c;transform-origin:left center;transform:scaleX(0.9569);">Mark as Unwatched</div>
<svg class="b" style="left:172.75px;top:284.25px;" width="10.5" height="10.5" viewBox="0 0 24 24" fill="none"><circle cx="12" cy="12" r="10" stroke="#f5191c" stroke-width="2.4" stroke-linecap="round" stroke-linejoin="round"/><path d="M7.500 12h9" stroke="#f5191c" stroke-width="2.8" stroke-linecap="round" stroke-linejoin="round"/></svg>
<div class="t " style="left:188.5px;top:286.02px;font-size:6.47px;line-height:8.76px;font-weight:700;color:#f5191c;transform-origin:left center;transform:scaleX(0.9033);">Delete Recording(s)</div>
</div>
</body></html>
